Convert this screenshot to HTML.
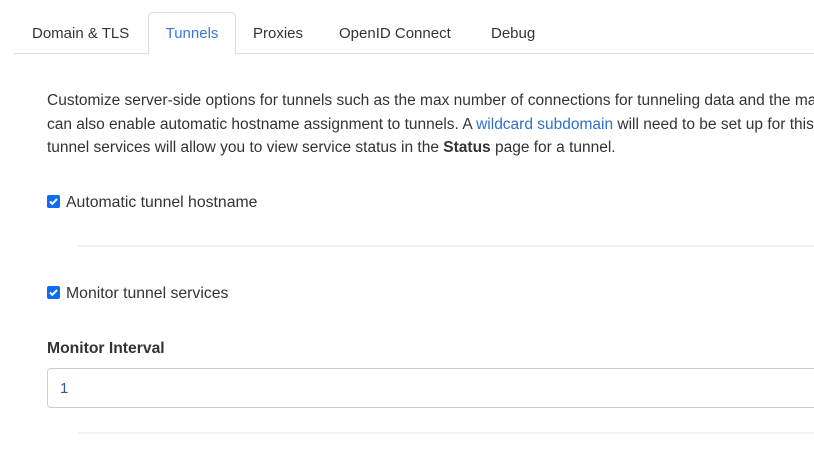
<!DOCTYPE html>
<html><head><style>
body{margin:0;width:814px;height:449px;overflow:hidden;background:#fff;font-family:"Liberation Sans",sans-serif;color:#333;position:relative}
.a{position:absolute;white-space:nowrap}
.tab{position:absolute;top:12px;height:41px;line-height:44px;font-size:15px;color:#333}
.cb{position:absolute;width:13px;height:13px;background:#0b6ef0;border-radius:2px}
.cb svg{position:absolute;left:1px;top:1px}
</style></head><body>
<div class="a" style="left:14px;top:53px;width:800px;border-top:1px solid #ddd"></div>
<div class="tab" style="left:32px">Domain &amp; TLS</div>
<div class="tab" style="left:148px;width:86px;border:1px solid #ddd;border-bottom:1px solid #fff;border-radius:4px 4px 0 0;background:#fff;text-align:center;color:#3a78d6;top:12px;height:41px;line-height:42px">Tunnels</div>
<div class="tab" style="left:253px">Proxies</div>
<div class="tab" style="left:339px">OpenID Connect</div>
<div class="tab" style="left:491px">Debug</div>
<div class="a" style="left:47px;top:89px;font-size:15.5px;line-height:23.5px">Customize server-side options for tunnels such as the max number of connections for tunneling data and the max<br>can also enable automatic hostname assignment to tunnels. A <span style="color:#2f6fd0">wildcard subdomain</span> will need to be set up for this<br>tunnel services will allow you to view service status in the <b>Status</b> page for a tunnel.</div>
<div class="cb" style="left:47px;top:195px"><svg width="11" height="11" viewBox="0 0 11 11"><path d="M2 5.5l2.3 2.3L9 3" stroke="#fff" stroke-width="2" fill="none"/></svg></div>
<div class="a" style="left:66px;top:194px;font-size:15.8px">Automatic tunnel hostname</div>
<div class="a" style="left:78px;top:245px;width:736px;height:2px;background:#f1f1f1"></div>
<div class="cb" style="left:47px;top:286px"><svg width="11" height="11" viewBox="0 0 11 11"><path d="M2 5.5l2.3 2.3L9 3" stroke="#fff" stroke-width="2" fill="none"/></svg></div>
<div class="a" style="left:66px;top:285px;font-size:15.8px">Monitor tunnel services</div>
<div class="a" style="left:47px;top:340px;font-size:15.7px;font-weight:bold">Monitor Interval</div>
<div class="a" style="left:47px;top:368px;width:780px;height:38px;border:1px solid #ccc;border-radius:4px"></div>
<div class="a" style="left:60px;top:380px;font-size:15px;color:#2b5c8a">1</div>
<div class="a" style="left:78px;top:432px;width:736px;height:2px;background:#f1f1f1"></div>
</body></html>
